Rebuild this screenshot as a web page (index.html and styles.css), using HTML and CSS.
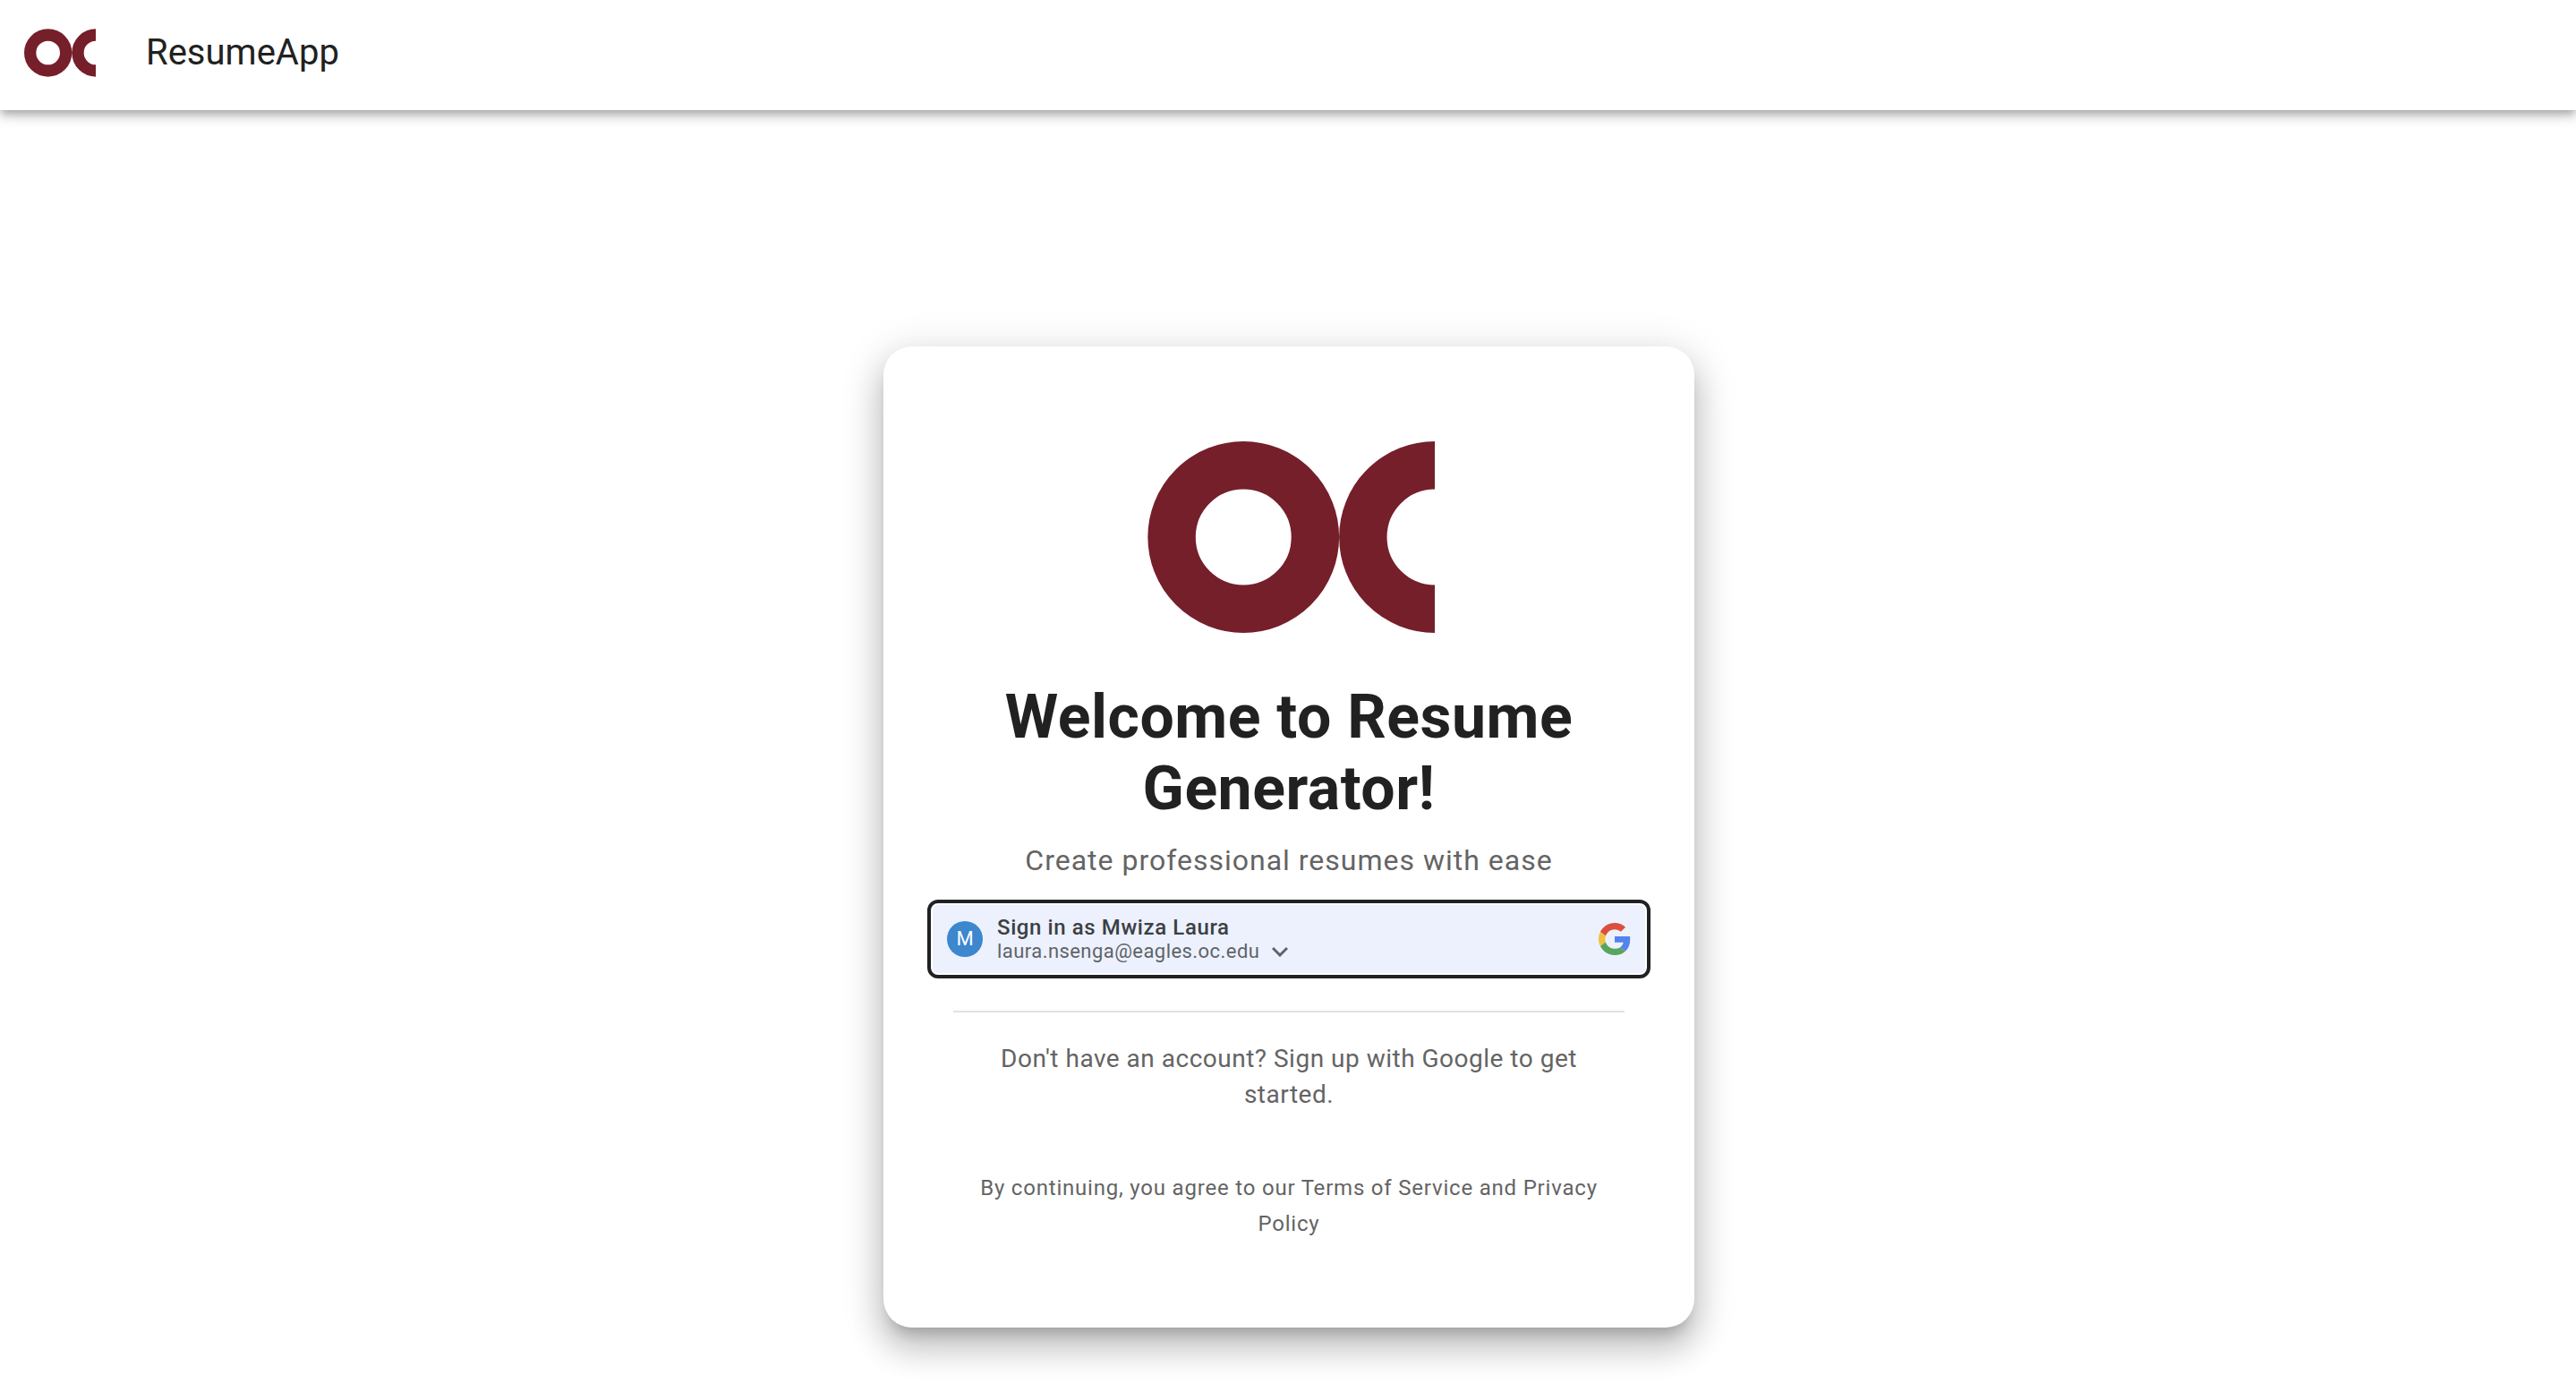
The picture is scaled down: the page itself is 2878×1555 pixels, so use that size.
FILE: index.html
```html
<!DOCTYPE html>
<html lang="en">
<head>
<meta charset="utf-8">
<meta name="viewport" content="width=device-width, initial-scale=1">
<title>ResumeApp</title>
<link rel="stylesheet" href="styles.css">
</head>
<body>
<header class="app-bar">
  <svg class="app-bar-logo" viewBox="0 0 240 160" role="img" aria-label="OC">
    <path class="logo-ring" d="M80 20a60 60 0 1 0 0 120a60 60 0 1 0 0-120M240 20a60 60 0 0 0 0 120"/>
  </svg>
  <div class="app-bar-title">ResumeApp</div>
</header>
<main class="page">
  <section class="card">
    <svg class="card-logo" viewBox="-4 0 244 160" role="img" aria-label="OC">
      <path class="logo-ring" d="M80 20a60 60 0 1 0 0 120a60 60 0 1 0 0-120M240 20a60 60 0 0 0 0 120"/>
    </svg>
    <h1 class="title">Welcome to Resume Generator!</h1>
    <p class="subtitle">Create professional resumes with ease</p>
    <button class="sign-in" type="button">
      <span class="avatar">M</span>
      <span class="account">
        <span class="account-name">Sign in as Mwiza Laura</span>
        <span class="account-email">laura.nsenga@eagles.oc.edu
          <svg class="chevron" viewBox="0 0 18 12" aria-hidden="true"><path d="M1 2l8 8l8-8"/></svg>
        </span>
      </span>
      <svg class="google" viewBox="0 0 48 48" aria-hidden="true">
        <path fill="#db4f3e" d="M24 9.5c3.54 0 6.71 1.22 9.21 3.6l6.85-6.85C35.9 2.38 30.47 0 24 0 14.62 0 6.51 5.38 2.56 13.22l7.98 6.19C12.43 13.72 17.74 9.5 24 9.5z"/>
        <path fill="#5383ec" d="M46.98 24.55c0-1.57-.15-3.09-.38-4.55H24v9.02h12.94c-.58 2.96-2.26 5.48-4.78 7.18l7.73 6c4.51-4.18 7.09-10.36 7.09-17.65z"/>
        <path fill="#f1bf42" d="M10.53 28.59c-.48-1.45-.76-2.99-.76-4.59s.27-3.14.76-4.59l-7.98-6.19C.92 16.46 0 20.12 0 24c0 3.88.92 7.54 2.56 10.78l7.97-6.19z"/>
        <path fill="#58a55c" d="M24 48c6.48 0 11.93-2.13 15.89-5.81l-7.73-6c-2.15 1.45-4.92 2.3-8.16 2.3-6.26 0-11.57-4.22-13.47-9.91l-7.98 6.19C6.51 42.62 14.62 48 24 48z"/>
      </svg>
    </button>
    <hr class="divider">
    <p class="sign-up">Don't have an account? Sign up with Google to get started.</p>
    <p class="legal">By continuing, you agree to our Terms of Service and Privacy Policy</p>
  </section>
</main>
</body>
</html>
```
FILE: styles.css
```css
* {
  box-sizing: border-box;
}

body {
  margin: 0;
  min-height: 100vh;
  background: #fff;
  color: #212121;
  font-family: Roboto, "Liberation Sans", sans-serif;
}

h1,
p {
  margin: 0;
}

.logo-ring {
  fill: none;
  stroke: #751f2a;
  stroke-width: 40;
}

.app-bar {
  display: flex;
  align-items: center;
  gap: 56px;
  padding: 32px 27px 37px;
  background: #fff;
  box-shadow: 0 4px 8px -2px rgba(0, 0, 0, .2), 0 8px 10px 0 rgba(0, 0, 0, .14), 0 2px 20px 0 rgba(0, 0, 0, .12);
}

.app-bar-logo {
  width: 80px;
  height: 54px;
}

.app-bar-title {
  font-size: 40px;
  line-height: 54px;
}

.page {
  display: flex;
  justify-content: center;
  padding: 264px 32px 71px 34px;
}

.card {
  display: flex;
  flex-direction: column;
  align-items: center;
  width: 100%;
  max-width: 906px;
  padding: 106px 48px 96px;
  border-radius: 32px;
  background: #fff;
  text-align: center;
  box-shadow: 0 14px 16px -8px rgba(0, 0, 0, .2), 0 24px 34px 4px rgba(0, 0, 0, .14), 0 10px 44px 8px rgba(0, 0, 0, .12);
}

.card-logo {
  width: 326px;
  height: 214px;
}

.title {
  max-width: 750px;
  margin-top: 54px;
  font-size: 68px;
  font-weight: 700;
  line-height: 80px;
  letter-spacing: .0073529412em;
}

.subtitle {
  margin-top: 12px;
  color: #646464;
  font-size: 32px;
  line-height: 56px;
  letter-spacing: .03125em;
}

.sign-in {
  display: flex;
  align-items: center;
  gap: 16px;
  width: 100%;
  max-width: 808px;
  height: 88px;
  margin-top: 16px;
  padding: 0 18px;
  border: 4px solid #202124;
  border-radius: 12px;
  background: #ecf1fd;
  box-shadow: inset 0 0 0 2px #fff;
  color: #3c4043;
  font-family: inherit;
  text-align: left;
  cursor: pointer;
}

.avatar {
  width: 40px;
  height: 40px;
  border-radius: 50%;
  background: #3c87cd;
  color: #fff;
  font-size: 22px;
  line-height: 40px;
  text-align: center;
}

.account {
  display: flex;
  flex: 1;
  flex-direction: column;
}

.account-name {
  font-size: 24px;
  font-weight: 500;
  line-height: 28px;
  letter-spacing: .025em;
}

.account-email {
  display: flex;
  align-items: center;
  gap: 14px;
  color: #5f6368;
  font-size: 22px;
  line-height: 26px;
  letter-spacing: .02em;
}

.chevron {
  width: 18px;
  height: 12px;
  fill: none;
  stroke: #5f6368;
  stroke-width: 3;
}

.google {
  width: 36px;
  height: 36px;
}

.divider {
  width: 100%;
  max-width: 750px;
  height: 2px;
  margin: 36px 0 0;
  border: 0;
  background: #e2e2e2;
}

.sign-up,
.legal {
  max-width: 712px;
  color: #646464;
  line-height: 40px;
}

.sign-up {
  margin-top: 32px;
  font-size: 28px;
  letter-spacing: .0178571429em;
}

.legal {
  margin-top: 64px;
  font-size: 24px;
  letter-spacing: .0333333333em;
}
```
